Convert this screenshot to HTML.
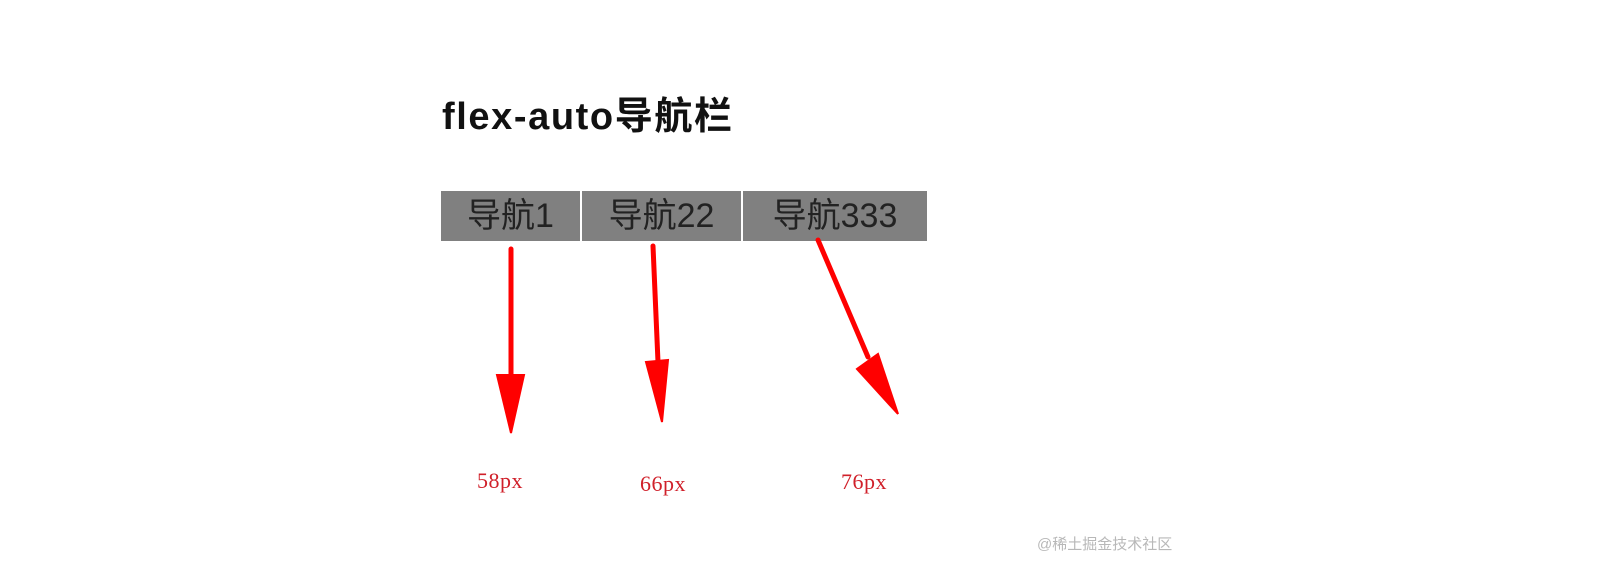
<!DOCTYPE html>
<html><head><meta charset="utf-8"><style>
body{margin:0;width:1606px;height:582px;background:#fff;position:relative;overflow:hidden;font-family:"Liberation Sans","Noto Sans CJK SC",sans-serif}
h1{position:absolute;left:442px;top:92px;margin:0;font-size:38px;font-weight:bold;color:#111;line-height:50px;letter-spacing:1.6px}
.nav{position:absolute;top:191px;height:50px;background:#808080;color:#222;font-size:34px;line-height:50px;text-align:center}
.lbl{position:absolute;color:#d0202a;font-family:"Liberation Serif",serif;font-size:22px;line-height:24px;letter-spacing:0.5px}
.wm{position:absolute;left:1037px;top:533px;color:#b8b8b8;font-size:15px}
</style></head><body>
<h1>flex-auto导航栏</h1>
<div class="nav" style="left:441px;width:139px">导航1</div>
<div class="nav" style="left:582px;width:159px">导航22</div>
<div class="nav" style="left:743px;width:184px">导航333</div>
<svg width="1606" height="582" style="position:absolute;left:0;top:0">
<g stroke="#f00" stroke-width="5" fill="#f00" stroke-linecap="round">
<line x1="511" y1="249" x2="511" y2="378"/>
<polygon points="497,375 524,375 511,433" stroke-width="2"/>
<line x1="653" y1="246" x2="658" y2="362"/>
<polygon points="646,362 668,360 662,422" stroke-width="2"/>
<line x1="818" y1="240" x2="868" y2="357"/>
<polygon points="857,369 878,354 898,414" stroke-width="2"/>
</g></svg>
<div class="lbl" style="left:477px;top:469px">58px</div>
<div class="lbl" style="left:640px;top:472px">66px</div>
<div class="lbl" style="left:841px;top:470px">76px</div>
<div class="wm">@稀土掘金技术社区</div>
</body></html>
